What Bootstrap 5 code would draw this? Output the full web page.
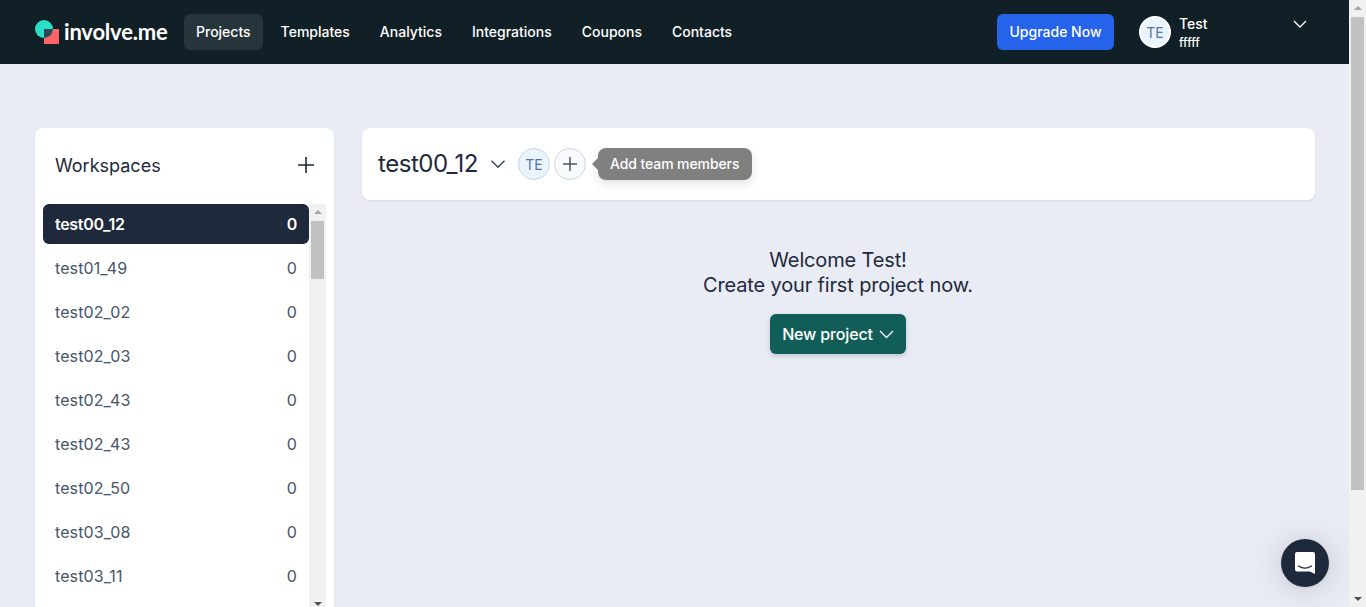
<!DOCTYPE html>
<html lang="en">
<head>
    <meta charset="UTF-8">
    <meta name="viewport" content="width=device-width, initial-scale=1.0">
    <title>involve.me</title>
    <link href="https://cdn.jsdelivr.net/npm/bootstrap@5.3.3/dist/css/bootstrap.min.css" rel="stylesheet">
    <style>
        html, body {
            height: 100%;
            overflow: hidden;
        }
        body {
            font-family: Inter, "Liberation Sans", sans-serif;
            background-color: #e9ecf5;
            color: #1e293b;
        }
        .page-col {
            min-width: 0;
        }
        .top-bar {
            height: 64px;
            background-color: #111f26;
            padding: 0 42px 0 35px;
        }
        .logo-box {
            width: 149px;
            flex: none;
        }
        .logo-text {
            font-family: Lato, Inter, sans-serif;
            font-size: 22px;
            font-weight: 700;
            letter-spacing: -.2px;
            color: #fff;
            line-height: 1;
            margin-left: 5px;
        }
        .top-link {
            color: #fff;
            font-size: 14px;
            font-weight: 500;
            padding: 0 12px;
            height: 36px;
            line-height: 36px;
            margin-right: 6px;
            border-radius: 6px;
            text-decoration: none;
        }
        .top-link.is-current {
            background-color: #26343b;
        }
        .upgrade-btn {
            background-color: #2563eb;
            color: #fff;
            font-size: 14px;
            font-weight: 500;
            border: 0;
            border-radius: 6px;
            width: 117px;
            height: 36px;
            padding: 0 0 1px;
        }
        .avatar-dot {
            width: 32px;
            height: 32px;
            flex: none;
            border-radius: 50%;
            background-color: #e9f4fe;
            border: 1px solid #cbd5e1;
            color: #5a7499;
            font-size: 14px;
        }
        .avatar-dot.on-dark {
            border: 2px solid #fff;
        }
        .avatar-dot.is-add {
            background-color: #f8fafc;
            color: #475569;
        }
        .user-box {
            margin-left: 25px;
            width: 168px;
        }
        .user-info {
            padding-top: 2px;
        }
        .user-name {
            font-size: 14px;
            font-weight: 500;
            color: #fff;
            line-height: 17px;
        }
        .user-sub {
            font-size: 12px;
            font-weight: 500;
            color: #fff;
            line-height: 18px;
            margin-top: 2px;
        }
        .user-caret {
            margin-bottom: 16px;
        }
        .page-body {
            padding: 64px 34px 0 35px;
            gap: 28px;
            height: 543px;
        }
        .side-panel {
            width: 299px;
            height: 479px;
            flex: none;
            background-color: #fff;
            border-radius: 8px 8px 0 0;
            box-shadow: 0 1px 3px rgba(15, 23, 42, .08);
            overflow: hidden;
        }
        .side-head {
            height: 76px;
            padding: 0 19px 2px 20px;
            font-size: 18px;
            color: #1e293b;
        }
        .ws-list {
            margin-left: 8px;
            width: 283px;
            height: 408px;
        }
        .ws-rows {
            width: 266px;
            flex: none;
        }
        .ws-row {
            height: 40px;
            margin-bottom: 4px;
            padding: 0 12px;
            border-radius: 6px;
            font-size: 16px;
            color: #475569;
            letter-spacing: .1px;
        }
        .ws-row.is-current {
            background-color: #1e293b;
            color: #fff;
            font-weight: 600;
            letter-spacing: -.3px;
        }
        /* drawn scrollbars, the headless window has none of its own */
        .fake-rail {
            width: 17px;
            flex: none;
            background-color: #f1f1f1;
        }
        .fake-arrow {
            height: 16px;
        }
        .fake-arrow::before {
            content: "";
            border-style: solid;
            border-width: 0 4px 4px;
            border-color: transparent transparent #a3a3a3;
        }
        .fake-arrow.is-down::before {
            border-width: 4px 4px 0;
            border-color: #505050 transparent transparent;
        }
        .fake-thumb {
            margin: 1px 2px 0;
            background-color: #c1c1c1;
        }
        .page-thumb {
            height: 473px;
        }
        .list-thumb {
            height: 58px;
        }
        .title-card {
            height: 72px;
            padding: 0 16px;
            background-color: #fff;
            border-radius: 8px;
            box-shadow: 0 1px 3px rgba(15, 23, 42, .08);
        }
        .ws-title {
            font-size: 24px;
            color: #1e293b;
            letter-spacing: -.45px;
            margin-right: 13px;
        }
        .title-caret {
            margin-right: 13px;
        }
        .hint-bubble {
            background-color: #808080;
            color: #fff;
            font-size: 14px;
            font-weight: 500;
            letter-spacing: -.1px;
            height: 32px;
            line-height: 32px;
            padding: 0 13px 0 12px;
            border-radius: 8px;
            margin-left: 12px;
            box-shadow: 0 4px 10px rgba(15, 23, 42, .12);
        }
        .hint-bubble::before {
            content: "";
            position: absolute;
            left: -6px;
            top: 10px;
            border-style: solid;
            border-width: 6px 6px 6px 0;
            border-color: transparent #808080 transparent transparent;
        }
        .welcome-box {
            padding-right: 1px;
        }
        .welcome-text {
            margin-top: 48px;
            font-size: 20px;
            line-height: 25px;
            letter-spacing: -.15px;
        }
        .new-btn {
            margin-top: 16px;
            height: 40px;
            width: 136px;
            padding: 0;
            background-color: #115e59;
            color: #fff;
            border: 0;
            border-radius: 6px;
            font-size: 16px;
            font-weight: 500;
            letter-spacing: -.15px;
            box-shadow: 0 2px 5px rgba(15, 23, 42, .18);
        }
        .new-caret {
            margin-left: 6px;
        }
        .chat-btn {
            position: fixed;
            left: 1281px;
            top: 539px;
            width: 48px;
            height: 48px;
            border-radius: 50%;
            background-color: #1e293b;
            box-shadow: 0 1px 6px rgba(0, 0, 0, .06), 0 2px 32px rgba(0, 0, 0, .16);
        }
    </style>
</head>
<body class="d-flex">
    <div class="page-col flex-grow-1">
        <nav class="top-bar d-flex align-items-center">
            <a href="#" class="logo-box d-flex align-items-center text-decoration-none">
                <svg width="24" height="24" viewBox="0 0 24 24">
                    <rect x="9" y="9" width="15" height="15" fill="#ff6464"/>
                    <circle cx="9" cy="9" r="9" fill="#2adfc6"/>
                    <path d="M9 9h9A9 9 0 0 1 9 18z" fill="#2a4a5c"/>
                </svg>
                <span class="logo-text">involve.me</span>
            </a>
            <a class="top-link is-current" href="#">Projects</a>
            <a class="top-link" href="#">Templates</a>
            <a class="top-link" href="#">Analytics</a>
            <a class="top-link" href="#">Integrations</a>
            <a class="top-link" href="#">Coupons</a>
            <a class="top-link" href="#">Contacts</a>
            <button class="upgrade-btn ms-auto" type="button">Upgrade Now</button>
            <div class="d-flex align-items-center user-box">
                <div class="avatar-dot on-dark d-flex align-items-center justify-content-center">TE</div>
                <div class="user-info ms-2">
                    <div class="user-name">Test</div>
                    <div class="user-sub">fffff</div>
                </div>
                <svg class="user-caret ms-auto" width="14" height="8" viewBox="0 0 14 8" fill="none" stroke="#fff" stroke-width="1.4"><path d="M1 1l6 6 6-6"/></svg>
            </div>
        </nav>

        <div class="page-body d-flex align-items-start">
            <aside class="side-panel">
                <div class="side-head d-flex align-items-center justify-content-between">
                    <span>Workspaces</span>
                    <svg width="18" height="18" viewBox="0 0 18 18" fill="none" stroke="#1e293b" stroke-width="1.6"><path d="M9 1v16M1 9h16"/></svg>
                </div>
                <div class="ws-list d-flex">
                    <div class="ws-rows">
                        <div class="ws-row is-current d-flex align-items-center justify-content-between"><span>test00_12</span><span>0</span></div>
                        <div class="ws-row d-flex align-items-center justify-content-between"><span>test01_49</span><span>0</span></div>
                        <div class="ws-row d-flex align-items-center justify-content-between"><span>test02_02</span><span>0</span></div>
                        <div class="ws-row d-flex align-items-center justify-content-between"><span>test02_03</span><span>0</span></div>
                        <div class="ws-row d-flex align-items-center justify-content-between"><span>test02_43</span><span>0</span></div>
                        <div class="ws-row d-flex align-items-center justify-content-between"><span>test02_43</span><span>0</span></div>
                        <div class="ws-row d-flex align-items-center justify-content-between"><span>test02_50</span><span>0</span></div>
                        <div class="ws-row d-flex align-items-center justify-content-between"><span>test03_08</span><span>0</span></div>
                        <div class="ws-row d-flex align-items-center justify-content-between"><span>test03_11</span><span>0</span></div>
                    </div>
                    <div class="fake-rail d-flex flex-column">
                        <div class="fake-arrow d-flex align-items-center justify-content-center"></div>
                        <div class="fake-thumb list-thumb"></div>
                        <div class="fake-arrow is-down d-flex align-items-center justify-content-center mt-auto"></div>
                    </div>
                </div>
            </aside>
            <main class="flex-grow-1">
                <div class="title-card d-flex align-items-center">
                    <span class="ws-title">test00_12</span>
                    <svg class="title-caret" width="14" height="8" viewBox="0 0 14 8" fill="none" stroke="#334155" stroke-width="1.4"><path d="M.5.7 7 7.200 13.500.7"/></svg>
                    <div class="avatar-dot d-flex align-items-center justify-content-center">TE</div>
                    <div class="avatar-dot is-add d-flex align-items-center justify-content-center ms-1">
                        <svg width="14" height="14" viewBox="0 0 14 14" fill="none" stroke="#475569" stroke-width="1.5"><path d="M7 0v14M0 7h14"/></svg>
                    </div>
                    <div class="hint-bubble position-relative">Add team members</div>
                </div>
                <div class="welcome-box text-center">
                    <div class="welcome-text">Welcome Test!<br>Create your first project now.</div>
                    <button class="new-btn d-inline-flex align-items-center justify-content-center" type="button">New project<svg class="new-caret" width="15" height="9" viewBox="0 0 15 9" fill="none" stroke="#fff" stroke-width="1.3"><path d="M1 1l6.500 6.500L14 1"/></svg></button>
                </div>
            </main>
        </div>
    </div>

    <div class="fake-rail d-flex flex-column">
        <div class="fake-arrow d-flex align-items-center justify-content-center"></div>
        <div class="fake-thumb page-thumb"></div>
        <div class="fake-arrow is-down d-flex align-items-center justify-content-center mt-auto"></div>
    </div>

    <div class="chat-btn d-flex align-items-center justify-content-center">
        <svg width="22" height="24" viewBox="0 0 22 24">
            <path d="M3 1h16a2 2 0 0 1 2 2v20l-5-2.500H3a2 2 0 0 1-2-2V3a2 2 0 0 1 2-2z" fill="#fff"/>
            <path d="M4.500 15c4 2.600 9 2.600 13 0" fill="none" stroke="#1e293b" stroke-width="1.400" stroke-linecap="round"/>
        </svg>
    </div>
</body>
</html>
